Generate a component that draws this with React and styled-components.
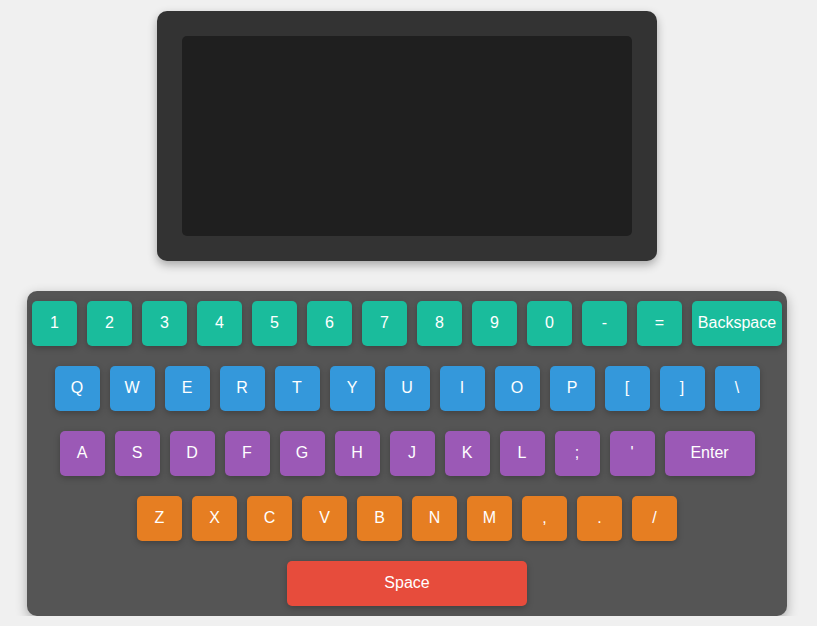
import React from "react";
import styled, { createGlobalStyle } from "styled-components";

const rows = [
  { color: "#1abc9c", keys: ["1", "2", "3", "4", "5", "6", "7", "8", "9", "0", "-", "=", "Backspace"] },
  { color: "#3498db", keys: ["Q", "W", "E", "R", "T", "Y", "U", "I", "O", "P", "[", "]", "\\"] },
  { color: "#9b59b6", keys: ["A", "S", "D", "F", "G", "H", "J", "K", "L", ";", "'", "Enter"] },
  { color: "#e67e22", keys: ["Z", "X", "C", "V", "B", "N", "M", ",", ".", "/"] },
  { color: "#e74c3c", keys: ["Space"] },
];

const widths = { Backspace: 90, Enter: 90, Space: 240 };

function App() {
  return (
    <>
      <GlobalStyle />
      <Page>
        <Monitor>
          <Screen />
        </Monitor>
        <Keyboard>
          {rows.map((row, i) => (
            <Row key={i}>
              {row.keys.map((k) => (
                <Key key={k} $color={row.color} $width={widths[k] || 45}>
                  {k}
                </Key>
              ))}
            </Row>
          ))}
        </Keyboard>
      </Page>
    </>
  );
}

const GlobalStyle = createGlobalStyle`
  body {
    margin: 0;
    background: #f0f0f0;
    font-family: "Liberation Sans", Arial, sans-serif;
    overflow: hidden;
  }
`;

const Page = styled.div`
  display: flex;
  flex-direction: column;
  align-items: center;
  padding: 11px 3px 0 0;
  gap: 30px;
`;

const Monitor = styled.div`
  width: 500px;
  height: 250px;
  box-sizing: border-box;
  padding: 25px;
  background: #333;
  border-radius: 10px;
  box-shadow: 0 4px 10px rgba(0, 0, 0, 0.3);
`;

const Screen = styled.div`
  width: 100%;
  height: 100%;
  background: #1f1f1f;
  border-radius: 5px;
`;

const Keyboard = styled.div`
  width: 760px;
  box-sizing: border-box;
  padding: 10px 5px;
  background: #555;
  border-radius: 10px;
  box-shadow: 0 4px 12px rgba(0, 0, 0, 0.3);
  display: flex;
  flex-direction: column;
  gap: 20px;
`;

const Row = styled.div`
  display: flex;
  justify-content: center;
  gap: 10px;
`;

const Key = styled.div`
  width: ${(p) => p.$width}px;
  height: 45px;
  box-sizing: border-box;
  padding-bottom: 2px;
  background: ${(p) => p.$color};
  color: #fff;
  font-size: 16px;
  border-radius: 5px;
  display: flex;
  align-items: center;
  justify-content: center;
  box-shadow: 0 2px 6px rgba(0, 0, 0, 0.25);
`;

export default App;
